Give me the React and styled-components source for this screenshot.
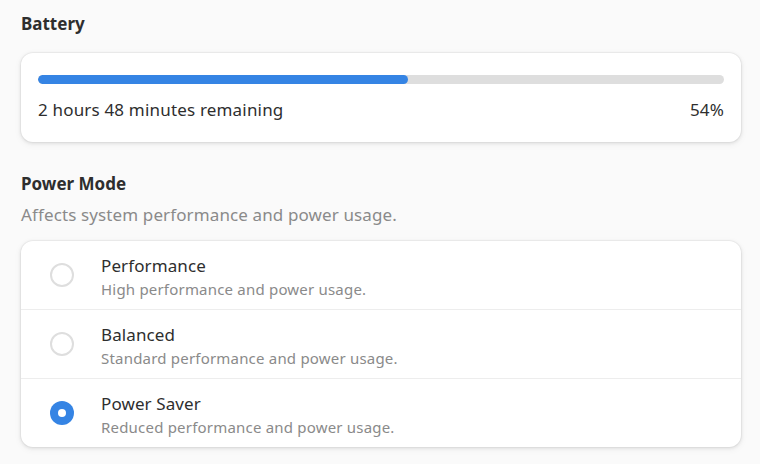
import styled, { createGlobalStyle } from "styled-components";

const GlobalStyle = createGlobalStyle`
  html, body {
    margin: 0;
    background: #fafafa;
  }
  body {
    font-family: "Noto Sans", "Open Sans", sans-serif;
    color: #2e2e2e;
  }
`;

const modes = [
  { title: "Performance", sub: "High performance and power usage." },
  { title: "Balanced", sub: "Standard performance and power usage." },
  { title: "Power Saver", sub: "Reduced performance and power usage.", checked: true },
];

const App = () => {
  const level = 54;
  return (
    <Page>
      <GlobalStyle />
      <Heading>Battery</Heading>
      <BatteryCard>
        <Track>
          <Fill style={{ width: `${level}%` }} />
        </Track>
        <BatteryInfo>
          <span>2 hours 48 minutes remaining</span>
          <span>{level}%</span>
        </BatteryInfo>
      </BatteryCard>

      <Heading $spaced>Power Mode</Heading>
      <Caption>Affects system performance and power usage.</Caption>
      <ListCard>
        {modes.map((m) => (
          <ModeRow key={m.title}>
            <Radio $checked={m.checked} />
            <RowText>
              <RowTitle>{m.title}</RowTitle>
              <RowSub>{m.sub}</RowSub>
            </RowText>
          </ModeRow>
        ))}
      </ListCard>
    </Page>
  );
};

//styled components
const Page = styled.div`
  padding: 12px 19px 16px 21px;
`;
const Heading = styled.h2`
  margin: ${(p) => (p.$spaced ? "30px" : "0")} 0 0;
  font-size: 17px;
  font-weight: 700;
  line-height: 24px;
  color: #2e2e2e;
`;
const Caption = styled.p`
  margin: 9px 0 0;
  font-size: 17px;
  line-height: 20px;
  letter-spacing: 0.12px;
  color: #8a8a8a;
`;
const Card = styled.div`
  background: #ffffff;
  border-radius: 12px;
  box-shadow: 0 0 0 1px rgba(0, 0, 0, 0.03), 0 1px 3px 1px rgba(0, 0, 0, 0.07),
    0 2px 6px 2px rgba(0, 0, 0, 0.03);
`;
const BatteryCard = styled(Card)`
  margin-top: 17px;
  padding: 22px 17px;
  display: flex;
  flex-direction: column;
  gap: 16px;
`;
const Track = styled.div`
  height: 9px;
  border-radius: 5px;
  background: #dedede;
  overflow: hidden;
`;
const Fill = styled.div`
  height: 100%;
  border-radius: 5px;
  background: #3584e4;
`;
const BatteryInfo = styled.div`
  display: flex;
  justify-content: space-between;
  font-size: 17px;
  line-height: 20px;
  letter-spacing: 0.18px;
`;
const ListCard = styled(Card)`
  margin-top: 16px;
  overflow: hidden;
`;
const ModeRow = styled.div`
  display: flex;
  align-items: flex-start;
  gap: 27px;
  padding: 14px 29px 10px;
  & + & {
    border-top: 1px solid #ededed;
  }
`;
const Radio = styled.span`
  flex: none;
  margin-top: 8px;
  width: 24px;
  height: 24px;
  box-sizing: border-box;
  border-radius: 50%;
  border: ${(p) => (p.$checked ? "none" : "2px solid #dedede")};
  background: ${(p) => (p.$checked ? "#3584e4" : "#ffffff")};
  display: flex;
  align-items: center;
  justify-content: center;
  &::after {
    content: "";
    display: ${(p) => (p.$checked ? "block" : "none")};
    width: 8px;
    height: 8px;
    border-radius: 50%;
    background: #ffffff;
  }
`;
const RowText = styled.div`
  display: flex;
  flex-direction: column;
  gap: 2px;
`;
const RowTitle = styled.div`
  font-size: 17px;
  line-height: 22px;
  letter-spacing: 0.1px;
`;
const RowSub = styled.div`
  font-size: 15px;
  line-height: 20px;
  letter-spacing: 0.2px;
  color: #8a8a8a;
`;

export default App;
